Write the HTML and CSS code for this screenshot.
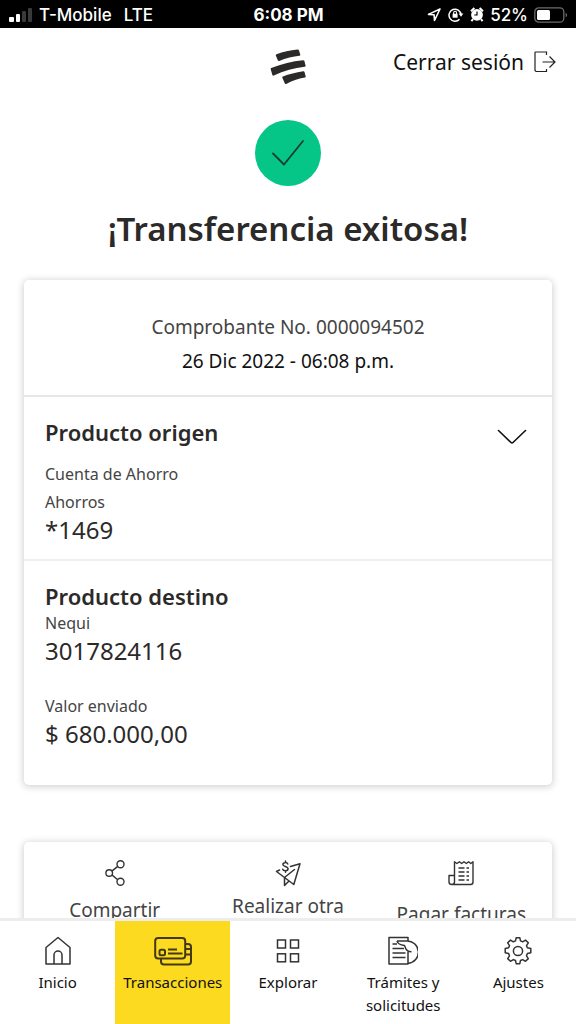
FILE: index.html
```html
<!DOCTYPE html>
<html lang="es">
<head>
<meta charset="utf-8">
<meta name="viewport" content="width=device-width, initial-scale=1">
<title>Transferencia exitosa</title>
<link rel="stylesheet" href="styles.css">
</head>
<body>
<div class="app">
  <div class="status">
    <div class="status-left">
      <svg width="24" height="16" viewBox="0 0 24 16" aria-hidden="true"><rect x="0" y="10" width="5" height="5" rx="1" fill="#fff"/><rect x="7" y="7" width="4" height="8" rx="1" fill="#fff"/><rect x="13" y="4" width="4" height="11" rx="1" fill="#3a3a3a"/><rect x="19" y="1" width="4" height="14" rx="1" fill="#3a3a3a"/></svg>
      <span>T-Mobile</span><span class="network">LTE</span>
    </div>
    <div class="status-time">6:08 PM</div>
    <div class="status-right">
      <svg width="15" height="15" viewBox="0 0 15 15" fill="none" stroke="#fff" stroke-width="1.6" stroke-linejoin="round" aria-hidden="true"><path d="M13 2 1.5 7.4l5.6.4.4 5.7z"/></svg>
      <svg width="16" height="15" viewBox="0 0 16 15" fill="none" stroke="#fff" stroke-width="1.5" aria-hidden="true"><path d="M11.5 12.2A6 6 0 1 1 13 7.5"/><path d="M10.6 6.6h4.8L13 9.8z" fill="#fff" stroke="none"/><rect x="4.6" y="6.7" width="5" height="4" fill="#fff" stroke="none"/><path d="M5.7 7V5.6a1.4 1.4 0 0 1 2.8 0V7" stroke-width="1.1"/></svg>
      <svg width="14" height="15" viewBox="0 0 14 15" aria-hidden="true"><circle cx="7" cy="7.8" r="5.9" fill="#fff"/><path d="M1 4.2 4.4 1M13 4.2 9.6 1M3 12.2l-1.6 2M11 12.2l1.6 2" stroke="#fff" stroke-width="2"/><path d="M7 4.4V8H4.3" fill="none" stroke="#000" stroke-width="1.2"/></svg>
      <span class="percent">52%</span>
      <svg width="34" height="16" viewBox="0 0 34 16" aria-hidden="true"><rect x=".8" y=".8" width="29" height="14.4" rx="4" fill="none" stroke="#6c6c6c" stroke-width="1.3"/><rect x="3" y="3" width="13" height="10" rx="1.5" fill="#fff"/><path d="M31.6 5.8c2 .8 2 3.6 0 4.4z" fill="#6c6c6c"/></svg>
    </div>
  </div>

  <main class="content">
    <header class="header">
      <svg class="logo" width="36" height="36" viewBox="0 0 36 36" fill="#2b2a29" aria-label="Bancolombia" role="img"><path d="M6.500 5.200C13 2.800 20 1.200 27.500.5q1.200-.1 1.500.9l1.300 4.300q.2 1-.8 1.100C23 7.600 16 9.200 9.200 11.900q-1 .3-1.400-.6L5.800 6.400q-.2-.9.700-1.200z"/><path d="M1.200 19.100C12 14.800 22 12.200 33 11.200q1.100-.1 1.400.8l1.200 4.700q.1 1-.8 1.100C24 19 14 21.800 3.800 26.600q-1 .4-1.400-.5L.7 20.300q-.2-.9.500-1.200z"/><path d="M12.800 27.600C19 25.200 26 23.300 33.200 22.300q1-.1 1.300.7l1.200 4.500q.1.900-.8 1.100C28 29.800 22 31.900 16.200 34.900q-.9.400-1.300-.5L12.300 28.700q-.2-.8.500-1.100z"/></svg>
      <a class="logout" href="#">Cerrar sesión
        <svg width="22" height="22" viewBox="0 0 22 22" fill="none" stroke="#222" stroke-width="1.200" aria-hidden="true"><path d="M12.500 4V1H1.500q-.5 0-.5.500V19.500l1 1h10.500V18M8.500 11H21M15.500 5.500 21 11l-5.500 5.500"/></svg>
      </a>
    </header>

    <section class="result">
      <span class="badge"><svg width="34" height="28" viewBox="0 0 34 28" fill="none" stroke="#173c30" stroke-width="1.800" stroke-linecap="round" stroke-linejoin="round" aria-hidden="true"><path d="M2 14.500 13 25.500 32 2"/></svg></span>
      <h1>¡Transferencia exitosa!</h1>
    </section>

    <article class="card">
      <div class="receipt">
        <p class="number">Comprobante No. 0000094502</p>
        <p class="date">26 Dic 2022 - 06:08 p.m.</p>
      </div>
      <section class="origin">
        <div class="origin-head">
          <h2>Producto origen</h2>
          <button class="toggle" type="button" aria-label="Ver detalle"><svg width="30" height="16" viewBox="0 0 30 16" fill="none" stroke="#111" stroke-width="1.600" stroke-linecap="round" stroke-linejoin="round" aria-hidden="true"><path d="M1.500 1.500 14 13.500q1 .9 2 0L28.500 1.500"/></svg></button>
        </div>
        <p class="label">Cuenta de Ahorro</p>
        <p class="label">Ahorros</p>
        <p class="value">*1469</p>
      </section>
      <section class="target">
        <h2>Producto destino</h2>
        <p class="label">Nequi</p>
        <p class="value">3017824116</p>
        <p class="label amount">Valor enviado</p>
        <p class="value">$ 680.000,00</p>
      </section>
    </article>

    <div class="card actions">
      <a class="action share" href="#">
        <svg width="20" height="26" viewBox="0 0 20 26" fill="none" stroke="#333" stroke-width="1.400" aria-hidden="true"><circle cx="4.200" cy="13" r="3.300"/><circle cx="15.500" cy="4.200" r="3.500"/><circle cx="15.500" cy="21.800" r="3.500"/><path d="M6.900 11.100 12.700 6.400M6.900 14.900l5.800 4.800"/></svg>
        <span>Compartir</span>
      </a>
      <a class="action repeat" href="#">
        <svg width="26" height="28" viewBox="0 0 26 28" fill="none" stroke="#333" stroke-width="1.500" stroke-linejoin="round" stroke-linecap="round" aria-hidden="true"><path d="M15.500 6.500 25 3.800 18.800 24.500 9.500 17.500 1.500 11.500 4.500 10M9.500 17.500V25.500L14 21M9.500 17.500 19.500 9.500"/><path d="M12.800 4C12 2 7.800 2.200 7.900 4.500 8 6.800 13.100 6.200 13.100 8.800 13.100 11.300 8.300 11.200 7.700 9.200M10.500 1v1.500M10.500 10.800v1.500"/></svg>
        <span>Realizar otra</span>
      </a>
      <a class="action bills" href="#">
        <svg width="26" height="26" viewBox="0 0 26 26" fill="none" stroke="#333" stroke-width="1.400" stroke-linejoin="round" aria-hidden="true"><path d="M6.500 22V1.800l2.300 1.700L11.400 1.800l2.300 1.700 2.300-1.700 2.300 1.700 2.300-1.700 2.200 1.700 2.200-1.700V22q0 2.500-2.500 2.500H4M1 15.500h5.500V22q0 2.500-2.700 2.500T1 22z"/><path d="M10.500 8h6M10.500 12h6M10.500 16h6M10.500 20h6M18.500 8H21M18.500 12H21M18.500 16H21M18.500 20H21"/></svg>
        <span>Pagar facturas</span>
      </a>
    </div>
  </main>

  <nav class="tabs">
    <a class="tab" href="#">
      <svg width="26" height="30" viewBox="0 0 26 30" fill="none" stroke="#333" stroke-width="1.500" stroke-linejoin="round" aria-hidden="true"><path d="M1 28V11.500L13 1.500l12 10V28zM9 28V19a4 4 0 0 1 8 0v9"/></svg>
      <span>Inicio</span>
    </a>
    <a class="tab active" href="#" aria-current="page">
      <svg width="38" height="30" viewBox="0 0 38 30" fill="none" stroke="#423814" stroke-width="2" aria-hidden="true"><rect x="1.200" y="2" width="30" height="20.500" rx="3"/><path d="M7 22.500V25.500q0 3 3 3H34q3 0 3-3V11q0-3-3-3H31.500M31.500 13H37M31.500 18.500H37"/><rect x="5.500" y="13.800" width="5.500" height="5.500" rx="1.500"/><path d="M14 13.500h9M14 17.500h14.500" stroke-width="1.800"/></svg>
      <span>Transacciones</span>
    </a>
    <a class="tab" href="#">
      <svg width="24" height="30" viewBox="0 0 24 30" fill="none" stroke="#333" stroke-width="1.500" aria-hidden="true"><rect x="1.500" y="4" width="8" height="8"/><rect x="14.500" y="4" width="8" height="8"/><rect x="1.500" y="17.800" width="8" height="8"/><rect x="14.500" y="17.800" width="8" height="8"/></svg>
      <span>Explorar</span>
    </a>
    <a class="tab" href="#">
      <svg width="30" height="30" viewBox="0 0 30 30" fill="none" stroke="#333" stroke-width="1.500" stroke-linejoin="round" aria-hidden="true"><path d="M20 5V1.500H1V28H20V16"/><path d="M9 5H18.500A11 11 0 0 1 20 27.200M9 5Q9.500 8.500 16.500 9.500L18.200 13.500Q20 16 23.500 15.800M4.500 8H9M4.500 12.500H16M4.500 17H17.500M4.500 21.500H17.500"/></svg>
      <span>Trámites y<br>solicitudes</span>
    </a>
    <a class="tab" href="#">
      <svg width="28" height="30" viewBox="0 0 28 30" fill="none" stroke="#333" stroke-width="1.500" stroke-linejoin="round" aria-hidden="true"><circle cx="14" cy="15" r="4.600"/><path d="M12.200 1.700h3.600l.7 3.200 2.200.9 2.800-1.700 2.800 2.700-1.800 2.800.9 2.200 3.400.8v4.200l-3.400.8-.9 2.200 1.800 2.800-2.800 2.700-2.800-1.700-2.200.9-.7 3.200h-3.600l-.7-3.200-2.200-.9-2.800 1.700-2.800-2.700 1.800-2.800-.9-2.200-3.400-.8v-4.200l3.400-.8.9-2.200-1.800-2.800 2.800-2.700 2.800 1.700 2.200-.9z"/></svg>
      <span>Ajustes</span>
    </a>
  </nav>
</div>
</body>
</html>
```

FILE: styles.css
```css
* { box-sizing: border-box; }

body {
  margin: 0;
  background: #fff;
  color: #2c2a29;
  font-family: "Noto Sans", "Open Sans", sans-serif;
}

h1, h2, p { margin: 0; }
a { color: inherit; text-decoration: none; }
svg { display: block; flex: none; }

.app {
  display: flex;
  flex-direction: column;
  height: 100vh;
}

.status {
  display: grid;
  grid-template-columns: 1fr auto 1fr;
  align-items: center;
  padding: 1px 8px 0 9px;
  height: 28px;
  flex: none;
  background: #000;
  color: #fff;
  font: 500 17px/24px Inter, sans-serif;
}

.status-left, .status-right { display: flex; align-items: center; }
.status-left { gap: 6px; }
.network { margin-left: 6px; }
.status-time { font-weight: 700; }
.status-right { justify-content: flex-end; gap: 6px; }

.content {
  flex: 1;
  min-height: 0;
  overflow: hidden;
  padding: 0 24px;
}

.header {
  display: grid;
  grid-template-columns: 1fr auto 1fr;
  align-items: start;
  padding-top: 21px;
  margin-right: -4px;
  margin-left: -4px;
}

.logo { grid-column: 2; }

.logout {
  display: flex;
  justify-content: flex-end;
  align-items: center;
  gap: 10px;
  color: #111;
  font-size: 21px;
  line-height: 26px;
}

.result {
  display: flex;
  flex-direction: column;
  align-items: center;
  padding-top: 35px;
}

.badge {
  display: grid;
  place-items: center;
  width: 66px;
  height: 66px;
  border-radius: 50%;
  background: #05c587;
}

h1 {
  padding-top: 20px;
  font-size: 33px;
  line-height: 46px;
  font-weight: 600;
}

h2 {
  font-size: 22px;
  line-height: 26px;
  font-weight: 600;
}

.card {
  margin-top: 28px;
  border-radius: 5px;
  background: #fff;
  box-shadow: 0 1px 7px 1px rgba(0, 0, 0, 0.18);
}

.receipt {
  padding: 30px 20px 17px;
  border-bottom: 2px solid #e6e6e6;
  text-align: center;
  font-size: 19px;
  line-height: 34px;
}

.number { color: #444; }
.date { color: #111; }

.origin {
  padding: 22px 21px 15px;
  border-bottom: 2px solid #f0f0f0;
}

.origin-head {
  display: flex;
  justify-content: space-between;
  align-items: center;
  padding-bottom: 15px;
}

.toggle {
  padding: 10px 4px 0;
  border: 0;
  background: none;
}

.label {
  color: #444;
  font-size: 16px;
  line-height: 28px;
}

.value {
  font-size: 24px;
  line-height: 28px;
}

.target { padding: 22px 21px 37px; }
.amount { padding-top: 27px; }

.actions {
  display: grid;
  grid-template-columns: repeat(3, 1fr);
  margin-top: 57px;
  padding: 18px 4px;
}

.action {
  display: flex;
  flex-direction: column;
  align-items: center;
  gap: 10px;
  text-align: center;
  color: #444;
  font-size: 19px;
  line-height: 28px;
}

.repeat { gap: 4px; }
.bills { gap: 14px; }

.tabs {
  display: grid;
  grid-template-columns: repeat(5, 1fr);
  flex: none;
  min-height: 106px;
  border-top: 3px solid #ededed;
  background: #fff;
}

.tab {
  display: flex;
  flex-direction: column;
  align-items: center;
  gap: 5px;
  padding-top: 15px;
  color: #111;
  text-align: center;
  font-size: 15px;
  line-height: 23px;
}

.active { background: #fbda20; }
```
